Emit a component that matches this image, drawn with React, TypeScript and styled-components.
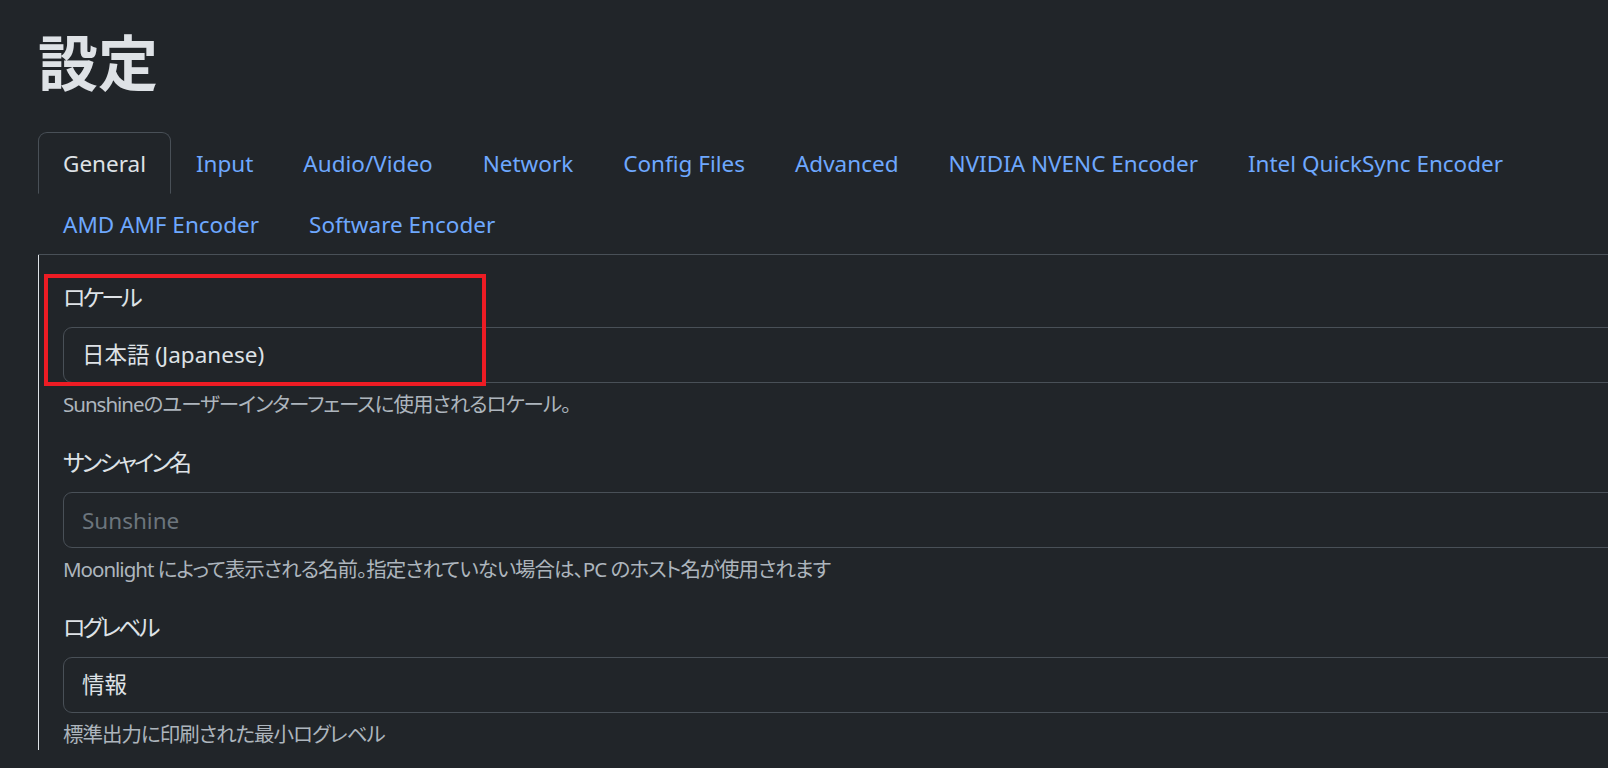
import React from "react";
import styled, { createGlobalStyle } from "styled-components";

const GlobalStyle = createGlobalStyle`
  html, body {
    margin: 0;
    padding: 0;
    background: #212529;
    overflow: hidden;
  }
  body {
    font-family: "Noto Sans", "Noto Sans CJK JP", sans-serif;
    color: #dee2e6;
    font-feature-settings: "palt";
  }
  * { box-sizing: border-box; }
`;

const Page = styled.div`
  width: 1700px;
  padding: 24px 0 0 38px;
`;

const Title = styled.h1`
  margin: 0 0 36px 0;
  font-family: "Noto Sans CJK JP", sans-serif;
  font-size: 60px;
  line-height: 72px;
  font-weight: 700;
  color: #dee2e6;
`;

const TabBar = styled.ul`
  display: flex;
  flex-wrap: wrap;
  list-style: none;
  margin: 0;
  padding: 0;
  border-bottom: 1px solid #495057;
`;

const Tab = styled.li<{ $active?: boolean }>`
  margin-bottom: -1px;
  padding: 13px 24px 11px;
  font-size: 22.5px;
  line-height: 36px;
  border: 1px solid ${(p) => (p.$active ? "#495057" : "transparent")};
  border-bottom-color: ${(p) => (p.$active ? "#212529" : "transparent")};
  border-radius: 9px 9px 0 0;
  background: ${(p) => (p.$active ? "#212529" : "transparent")};
  color: ${(p) => (p.$active ? "#dee2e6" : "#6ea8fe")};
  cursor: pointer;
  white-space: nowrap;
`;

const Panel = styled.div`
  position: relative;
  border-left: 1px solid #dee2e6;
  padding: 24px 24px 0 24px;
`;

const Field = styled.div`
  margin-bottom: 24px;
`;

const Label = styled.label`
  display: block;
  margin-bottom: 12px;
  font-size: 23px;
  line-height: 36px;
  letter-spacing: -2.8px;
  color: #dee2e6;
`;

const controlStyles = `
  display: block;
  width: 100%;
  height: 56px;
  margin: 0;
  padding: 9px 54px 9px 18px;
  font-family: "Noto Sans", "Noto Sans CJK JP", sans-serif;
  font-feature-settings: "palt";
  font-size: 22.5px;
  line-height: 36px;
  color: #dee2e6;
  background: #212529;
  border: 1px solid #495057;
  border-radius: 9px;
  outline: none;
  appearance: none;
`;

const Select = styled.select`
  ${controlStyles}
`;

const TextInput = styled.input`
  ${controlStyles}
  padding-right: 18px;
  &::placeholder {
    color: #6c757d;
  }
`;

const Help = styled.div`
  margin-top: 6px;
  font-size: 20.5px;
  line-height: 31px;
  letter-spacing: -1px;
  color: #adb5bd;
`;

const Annotation = styled.div`
  position: absolute;
  left: 5px;
  top: 19px;
  width: 442px;
  height: 112px;
  border: 4px solid #ed1c24;
  pointer-events: none;
`;

const tabs = [
  "General",
  "Input",
  "Audio/Video",
  "Network",
  "Config Files",
  "Advanced",
  "NVIDIA NVENC Encoder",
  "Intel QuickSync Encoder",
  "AMD AMF Encoder",
  "Software Encoder",
];

export default function App() {
  return (
    <>
      <GlobalStyle />
      <Page>
        <Title>設定</Title>
        <TabBar>
          {tabs.map((t, i) => (
            <Tab key={t} $active={i === 0}>
              {t}
            </Tab>
          ))}
        </TabBar>
        <Panel>
          <Field>
            <Label htmlFor="locale">ロケール</Label>
            <Select id="locale" defaultValue="ja">
              <option value="ja">日本語 (Japanese)</option>
              <option value="en">English</option>
            </Select>
            <Help>Sunshineのユーザーインターフェースに使用されるロケール。</Help>
          </Field>
          <Field>
            <Label htmlFor="name">サンシャイン名</Label>
            <TextInput id="name" type="text" placeholder="Sunshine" />
            <Help>
              Moonlight によって表示される名前。指定されていない場合は、PC のホスト名が使用されます
            </Help>
          </Field>
          <Field>
            <Label htmlFor="level">ログレベル</Label>
            <Select id="level" defaultValue="info">
              <option value="info">情報</option>
              <option value="debug">デバッグ</option>
            </Select>
            <Help>標準出力に印刷された最小ログレベル</Help>
          </Field>
          <Annotation />
        </Panel>
      </Page>
    </>
  );
}
